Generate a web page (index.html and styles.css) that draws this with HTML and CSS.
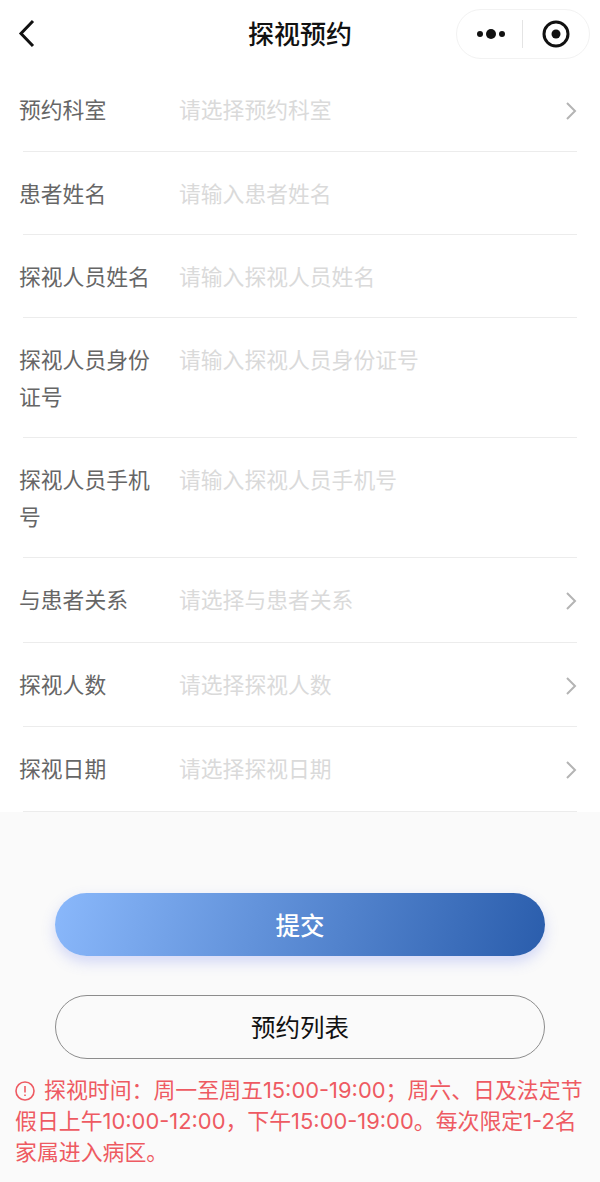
FILE: index.html
```html
<!DOCTYPE html>
<html lang="zh-CN">
<head>
    <meta charset="UTF-8">
    <meta name="viewport" content="width=device-width, initial-scale=1.0">
    <title>探视预约</title>
    <link rel="stylesheet" href="styles.css">
</head>
<body>
    <div class="nav-bar">
        <svg class="back-icon" width="18" height="30" viewBox="0 0 18 30"><path d="M15 2 L3 14.5 L15 27" fill="none" stroke="#111" stroke-width="3"/></svg>
        <div class="nav-title">探视预约</div>
        <div class="capsule">
            <svg width="28" height="10" viewBox="0 0 28 10"><circle cx="3" cy="5" r="3" fill="#111"/><circle cx="14" cy="5" r="5" fill="#111"/><circle cx="25" cy="5" r="3" fill="#111"/></svg>
            <div class="capsule-line"></div>
            <svg width="28" height="28" viewBox="0 0 28 28"><circle cx="14" cy="14" r="12" fill="none" stroke="#111" stroke-width="3"/><circle cx="14" cy="14" r="4.500" fill="#111"/></svg>
        </div>
    </div>

    <div class="form">
        <div class="form-row first pick">
            <div class="label">预约科室</div>
            <div class="value">请选择预约科室</div>
            <svg class="arrow" width="12" height="20" viewBox="0 0 12 20"><path d="M2 2 L10 10 L2 18" fill="none" stroke="#b4b4b4" stroke-width="2"/></svg>
        </div>
        <div class="form-row">
            <div class="label">患者姓名</div>
            <div class="value">请输入患者姓名</div>
        </div>
        <div class="form-row">
            <div class="label">探视人员姓名</div>
            <div class="value">请输入探视人员姓名</div>
        </div>
        <div class="form-row">
            <div class="label">探视人员身份证号</div>
            <div class="value">请输入探视人员身份证号</div>
        </div>
        <div class="form-row">
            <div class="label">探视人员手机号</div>
            <div class="value">请输入探视人员手机号</div>
        </div>
        <div class="form-row pick">
            <div class="label">与患者关系</div>
            <div class="value">请选择与患者关系</div>
            <svg class="arrow" width="12" height="20" viewBox="0 0 12 20"><path d="M2 2 L10 10 L2 18" fill="none" stroke="#b4b4b4" stroke-width="2"/></svg>
        </div>
        <div class="form-row pick">
            <div class="label">探视人数</div>
            <div class="value">请选择探视人数</div>
            <svg class="arrow" width="12" height="20" viewBox="0 0 12 20"><path d="M2 2 L10 10 L2 18" fill="none" stroke="#b4b4b4" stroke-width="2"/></svg>
        </div>
        <div class="form-row pick">
            <div class="label">探视日期</div>
            <div class="value">请选择探视日期</div>
            <svg class="arrow" width="12" height="20" viewBox="0 0 12 20"><path d="M2 2 L10 10 L2 18" fill="none" stroke="#b4b4b4" stroke-width="2"/></svg>
        </div>
    </div>

    <div class="footer">
        <div class="btn btn-submit">提交</div>
        <div class="btn btn-list">预约列表</div>
        <div class="notice">
            <svg class="notice-icon" width="20" height="20" viewBox="0 0 20 20"><circle cx="10" cy="10" r="9" fill="none" stroke="#ee5a62" stroke-width="1.600"/><path d="M10 5 V11.500 M10 13.500 V15" stroke="#ee5a62" stroke-width="1.600"/></svg>探视时间：周一至周五15:00-19:00；周六、日及法定节假日上午10:00-12:00，下午15:00-19:00。每次限定1-2名家属进入病区。
        </div>
    </div>
</body>
</html>
```

FILE: styles.css
```css
body {
    margin: 0;
    padding: 0;
    background-color: #fff;
    font-family: "Noto Sans CJK SC", "Noto Sans", sans-serif;
    color: #111;
}

/* top bar */
.nav-bar {
    position: relative;
    display: flex;
    align-items: center;
    height: 67px;
    padding: 0 10px 0 18px;
    box-sizing: border-box;
}
.nav-title {
    position: absolute;
    left: 0;
    right: 0;
    padding-bottom: 2px;
    text-align: center;
    font-size: 26px;
    font-weight: 500;
}
.capsule {
    display: flex;
    align-items: center;
    margin-left: auto;
    width: 134px;
    height: 50px;
    padding-left: 20px;
    box-sizing: border-box;
    border: 1px solid #f2f2f2;
    border-radius: 25px;
}
.capsule-line {
    width: 1px;
    height: 28px;
    margin: 0 19px 0 17px;
    background-color: #e4e4e4;
}

/* form */
.form-row {
    display: flex;
    align-items: flex-start;
    margin: 0 23px;
    padding: 22px 0 23px;
    border-bottom: 1px solid #ececec;
    font-size: 21.800px;
    line-height: 37px;
}
.form-row.pick {
    padding-bottom: 24.500px;
}
.form-row.first {
    padding-top: 23px;
    padding-bottom: 24px;
}
.label {
    width: 135px;
    margin-left: -4px;
    margin-right: 25px;
    color: #666;
}
.value {
    flex: 1;
    color: #dadada;
}
.arrow {
    margin-top: 11px;
}

/* bottom */
.footer {
    height: 370px;
    padding: 81px 15px 0;
    box-sizing: border-box;
    background-color: #fafafa;
}
.btn {
    display: flex;
    align-items: center;
    justify-content: center;
    width: 490px;
    margin: 0 auto;
    box-sizing: border-box;
    border-radius: 32px;
}
.btn-submit {
    height: 63px;
    background: linear-gradient(105deg, #8ab8fb, #2a5dac);
    box-shadow: 0 6px 14px rgba(90, 110, 240, 0.25);
    color: #fff;
    font-size: 24.500px;
    font-weight: 500;
}
.btn-list {
    height: 64px;
    margin-top: 39px;
    border: 1px solid #8c8c8c;
    font-size: 24.500px;
}
.notice {
    margin: 16px -5px 0 0;
    font-family: Inter, "Noto Sans CJK SC", sans-serif;
    font-size: 21.900px;
    line-height: 31px;
    color: #ee5a62;
}
.notice-icon {
    vertical-align: -3px;
    margin-right: 9px;
}
```
